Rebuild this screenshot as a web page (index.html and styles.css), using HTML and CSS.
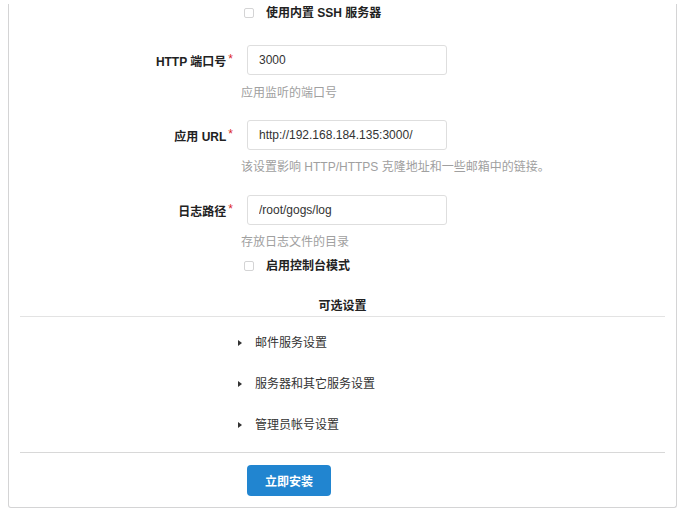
FILE: index.html
```html
<!DOCTYPE html>
<html lang="zh-CN">
<head>
<meta charset="utf-8">
<title>安装</title>
<link rel="stylesheet" href="styles.css">
</head>
<body>
<div class="segment">
  <div class="check-row first">
    <span class="box"></span><span class="check-label">使用内置 SSH 服务器</span>
  </div>

  <div class="field f-http">
    <label class="field-label">HTTP 端口号<span class="req">*</span></label>
    <input class="text-input" type="text" value="3000">
  </div>
  <div class="help">应用监听的端口号</div>

  <div class="field f-next">
    <label class="field-label">应用 URL<span class="req">*</span></label>
    <input class="text-input" type="text" value="http://192.168.184.135:3000/">
  </div>
  <div class="help">该设置影响 HTTP/HTTPS 克隆地址和一些邮箱中的链接。</div>

  <div class="field f-next2">
    <label class="field-label">日志路径<span class="req">*</span></label>
    <input class="text-input" type="text" value="/root/gogs/log">
  </div>
  <div class="help">存放日志文件的目录</div>

  <div class="check-row second">
    <span class="box"></span><span class="check-label">启用控制台模式</span>
  </div>

  <h4 class="section-title">可选设置</h4>
  <div class="divider"></div>

  <div class="collapse first-item"><span class="caret"></span><span>邮件服务设置</span></div>
  <div class="collapse"><span class="caret"></span><span>服务器和其它服务设置</span></div>
  <div class="collapse"><span class="caret"></span><span>管理员帐号设置</span></div>

  <div class="divider bottom"></div>

  <div class="actions">
    <button class="primary-btn" type="button">立即安装</button>
  </div>
</div>
</body>
</html>
```

FILE: styles.css
```css
html, body {
  margin: 0;
  padding: 0;
  background: #ffffff;
}

body {
  font-family: "Liberation Sans", "Noto Sans CJK SC", sans-serif;
  font-size: 12px;
  color: #333333;
}

.segment {
  margin-left: 8px;
  width: 669px;
  box-sizing: border-box;
  border: 1px solid #d4d4d5;
  border-top: none;
  border-radius: 0 0 3px 3px;
  padding: 0 11px 11px 11px;
}

.check-row {
  display: flex;
  align-items: center;
  height: 18px;
  padding-left: 224px;
}

.check-row.first {
  margin-top: 4px;
}

.check-row.second {
  margin-top: 7px;
}

.box {
  width: 10px;
  height: 10px;
  box-sizing: border-box;
  border: 1px solid #d4d4d5;
  border-radius: 2px;
  background: #fff;
  flex: none;
}

.check-label {
  margin-left: 12px;
  font-weight: bold;
  color: #222;
  line-height: 18px;
}

.field {
  display: flex;
  align-items: center;
  height: 30px;
}

.f-http { margin-top: 23px; }
.f-next { margin-top: 19px; }
.f-next2 { margin-top: 20px; }

.field-label {
  width: 227px;
  box-sizing: border-box;
  padding-right: 14px;
  text-align: right;
  font-weight: bold;
  color: #222;
  line-height: 16px;
  flex: none;
}

.req {
  color: #db2828;
  margin-left: 2px;
  font-weight: normal;
  vertical-align: 3px;
}

.text-input {
  width: 200px;
  height: 30px;
  box-sizing: border-box;
  margin: 0;
  border: 1px solid #dedede;
  border-radius: 3px;
  padding: 0 11px;
  font-family: "Liberation Sans", "Noto Sans CJK SC", sans-serif;
  font-size: 12px;
  color: #333;
  background: #fff;
  outline: none;
}

.help {
  padding-left: 221px;
  line-height: 16px;
  color: #a0a0a0;
  margin-top: 9px;
}

.f-http + .help { margin-top: 10px; }

.section-title {
  margin: 23px 0 2px 0;
  text-align: center;
  font-size: 12px;
  line-height: 16px;
  font-weight: bold;
  color: #222;
}

.divider {
  height: 1px;
  background: #e3e3e3;
}

.divider.bottom {
  margin-top: 19px;
  background: #d8d8d8;
}

.collapse {
  display: flex;
  align-items: center;
  padding-left: 218px;
  line-height: 16px;
  height: 16px;
  margin-top: 25px;
  color: #333;
}

.collapse.first-item {
  margin-top: 18px;
}

.caret {
  width: 0;
  height: 0;
  border-top: 3.5px solid transparent;
  border-bottom: 3.5px solid transparent;
  border-left: 4px solid #333;
  margin-right: 13px;
  flex: none;
}

.actions {
  margin-top: 12px;
  padding-left: 227px;
}

.primary-btn {
  display: block;
  width: 84px;
  height: 31px;
  margin: 0;
  border: none;
  border-radius: 4px;
  background: #2185d0;
  color: #ffffff;
  font-family: "Liberation Sans", "Noto Sans CJK SC", sans-serif;
  font-size: 12px;
  font-weight: bold;
  cursor: pointer;
}
```
